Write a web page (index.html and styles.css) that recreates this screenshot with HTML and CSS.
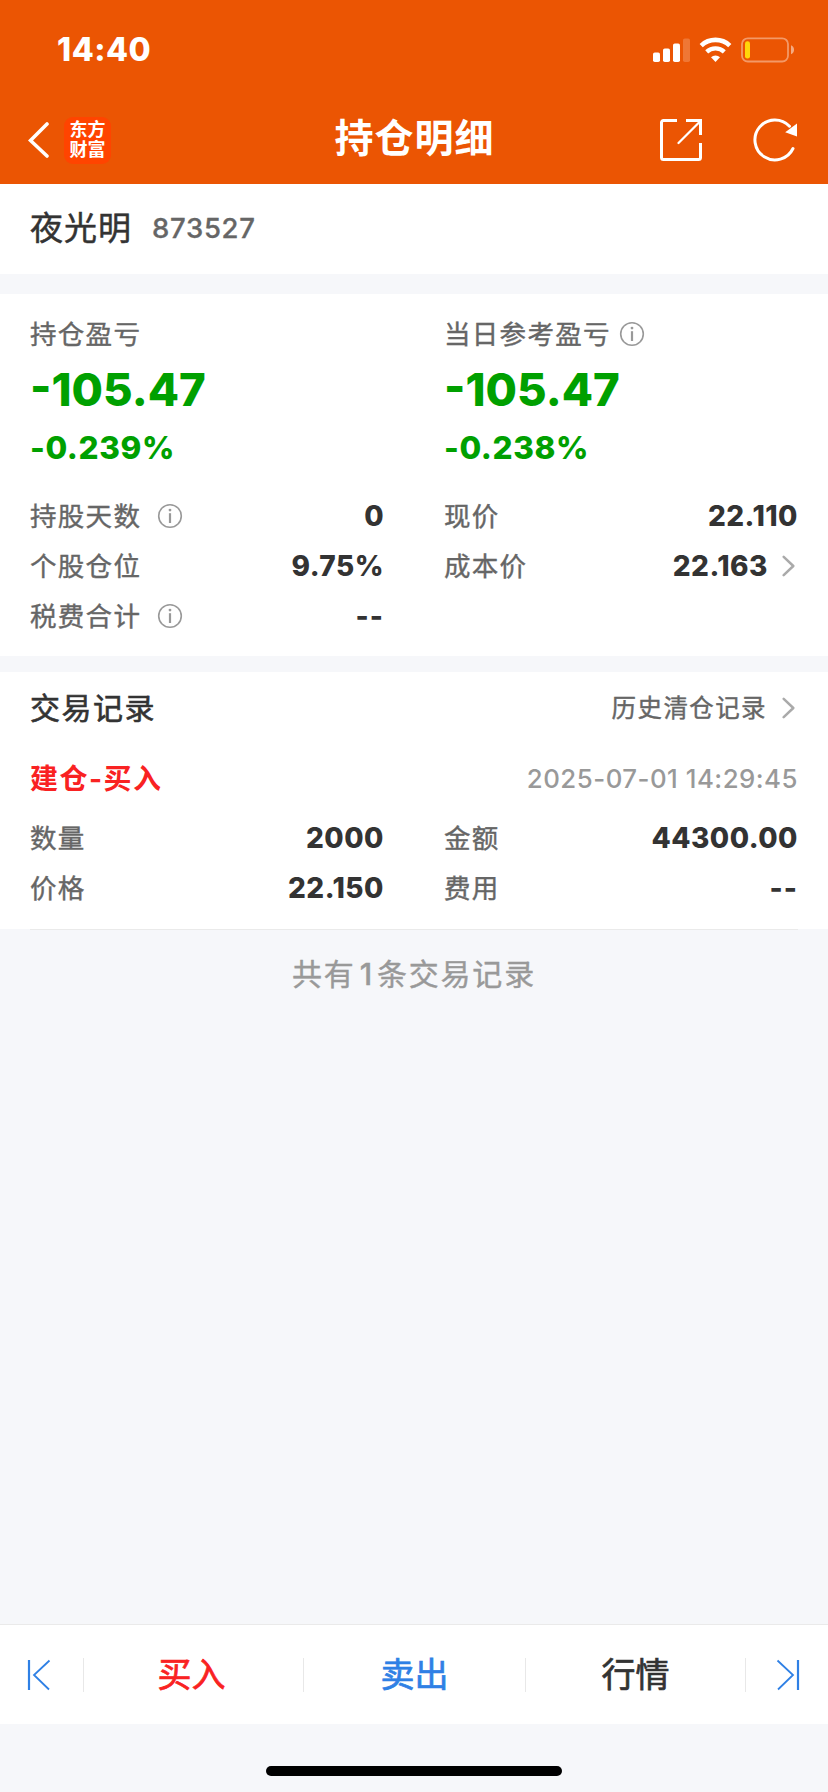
FILE: index.html
```html
<!DOCTYPE html>
<html lang="zh-CN">
<head>
<meta charset="utf-8">
<title>持仓明细</title>
<link rel="stylesheet" href="styles.css">
</head>
<body>
<svg class="defs" width="0" height="0">
  <symbol id="info" viewBox="0 0 26 26"><circle cx="13" cy="13" r="11.3" fill="none" stroke="currentColor" stroke-width="1.6"/><circle cx="13" cy="7.1" r="1.4" fill="currentColor"/><path d="M13 10.2V20" stroke="currentColor" stroke-width="2.2"/></symbol>
  <symbol id="arrow" viewBox="0 0 16 24"><path d="M1.700 2.800 11.300 12 1.700 21.200" fill="none" stroke="currentColor" stroke-width="2.500" stroke-linecap="round" stroke-linejoin="round"/></symbol>
</svg>
<div class="screen">
  <header class="header">
    <div class="status">
      <span class="time">14:40</span>
      <svg class="status-icons" width="142" height="26" viewBox="0 0 142 26">
        <g fill="#fff"><rect x="0" y="15.500" width="7" height="9.500" rx="1.800"/><rect x="10" y="11.500" width="7" height="13.500" rx="1.800"/><rect x="20" y="6.500" width="7" height="18.500" rx="1.800"/><rect x="30" y="1.500" width="7" height="23.500" rx="1.800" opacity=".2"/></g>
        <g fill="none" stroke="#fff"><path d="M48.200 8.600a20.800 20.800 0 0 1 28.600 0" stroke-width="4.600"/><path d="M53.700 14.900a12.800 12.800 0 0 1 17.600 0" stroke-width="4.300"/></g>
        <path d="M58 20.200a6.600 6.600 0 0 1 9 0L62.500 25z" fill="#fff"/>
        <rect x="89" y="1.300" width="46" height="23.200" rx="5.800" fill="none" stroke="#fff" stroke-opacity=".4" stroke-width="1.800"/>
        <path d="M138 8.300c4 1.300 4 7.700 0 9z" fill="#fff" opacity=".5"/>
        <rect x="92" y="4.300" width="5" height="17.200" rx="2.300" fill="#ffd60a"/>
      </svg>
    </div>
    <nav class="nav">
      <div class="nav-left">
        <svg width="22" height="38" viewBox="0 0 22 38"><path d="M19 3 2.500 19.500 19 35" fill="none" stroke="#fff" stroke-width="3.600" stroke-linecap="round"/></svg>
        <div class="logo"><span>东方</span><span>财富</span></div>
      </div>
      <h1 class="nav-title">持仓明细</h1>
      <div class="nav-right">
        <svg width="42" height="42" viewBox="0 0 42 42"><path d="M17 1.500H3.500a2 2 0 0 0-2 2v35a2 2 0 0 0 2 2h35a2 2 0 0 0 2-2V24M26 1.500H40.500V16" fill="none" stroke="#fff" stroke-width="3"/><path d="M18.500 24 39.500 3" fill="none" stroke="#fff" stroke-width="2.300" stroke-linecap="round"/></svg>
        <svg width="45" height="44" viewBox="0 0 45 44"><path d="M37.500 8.200A20 20 0 1 0 41 30.500" fill="none" stroke="#fff" stroke-width="3" stroke-linecap="round"/><path d="M45 5.500V18.500L33.200 14.300z" fill="#fff"/></svg>
      </div>
    </nav>
  </header>

  <section class="stock"><span class="stock-name">夜光明</span><span class="stock-code">873527</span></section>

  <section class="card summary">
    <div class="cols">
      <div class="col">
        <div class="row"><span class="label">持仓盈亏</span></div>
        <div class="profit">-105.47</div>
        <div class="percent">-0.239%</div>
        <div class="row"><span class="label">持股天数</span><svg class="info"><use href="#info"/></svg><span class="value">0</span></div>
        <div class="row"><span class="label">个股仓位</span><span class="value">9.75%</span></div>
        <div class="row"><span class="label">税费合计</span><svg class="info"><use href="#info"/></svg><span class="value dash">--</span></div>
      </div>
      <div class="col">
        <div class="row"><span class="label">当日参考盈亏</span><svg class="info near"><use href="#info"/></svg></div>
        <div class="profit">-105.47</div>
        <div class="percent">-0.238%</div>
        <div class="row"><span class="label">现价</span><span class="value">22.110</span></div>
        <div class="row"><span class="label">成本价</span><span class="value">22.163</span><svg class="arrow"><use href="#arrow"/></svg></div>
      </div>
    </div>
  </section>

  <section class="card records">
    <div class="records-head"><h2 class="records-title">交易记录</h2><span class="history">历史清仓记录</span><svg class="arrow"><use href="#arrow"/></svg></div>
    <div class="record-head"><span class="trade">建仓-买入</span><time class="date">2025-07-01 14:29:45</time></div>
    <div class="cols record-body">
      <div class="col">
        <div class="row"><span class="label">数量</span><span class="value">2000</span></div>
        <div class="row"><span class="label">价格</span><span class="value">22.150</span></div>
      </div>
      <div class="col">
        <div class="row"><span class="label">金额</span><span class="value">44300.00</span></div>
        <div class="row"><span class="label">费用</span><span class="value dash">--</span></div>
      </div>
    </div>
  </section>
  <p class="count">共有<span class="count-number">1</span>条交易记录</p>

  <footer class="bar">
    <div class="step"><svg width="24" height="34" viewBox="0 0 24 34"><path d="M2 2V32" stroke="currentColor" stroke-width="2.200"/><path d="M22.500 2.500 7 17 22 31.500" fill="none" stroke="currentColor" stroke-width="1.800"/></svg></div>
    <div class="tab buy">买入</div>
    <div class="tab sell">卖出</div>
    <div class="tab quote">行情</div>
    <div class="step last"><svg width="24" height="34" viewBox="0 0 24 34"><path d="M22 2V32" stroke="currentColor" stroke-width="2.200"/><path d="M1.500 2.500 17 17 2 31.500" fill="none" stroke="currentColor" stroke-width="1.800"/></svg></div>
  </footer>
  <div class="home"><div class="home-line"></div></div>
</div>
</body>
</html>
```

FILE: styles.css
```css
* { box-sizing: border-box; margin: 0; padding: 0; }
body { background: #f6f7fa; font-family: Inter, "Noto Sans CJK SC", sans-serif; color: #333; }
svg { display: block; flex: none; }
.defs { position: absolute; }
.screen { display: flex; flex-direction: column; width: 828px; height: 1792px; overflow: hidden; white-space: nowrap; }

.header { height: 184px; background: #eb5503; color: #fff; }
.status { display: flex; justify-content: space-between; align-items: center; height: 99px; padding: 0 33px 0 57px; }
.time { font-size: 32px; font-weight: 800; letter-spacing: .5px; }
.nav { display: grid; grid-template-columns: 1fr auto 1fr; align-items: center; height: 82px; padding: 0 31px 0 28px; }
.nav-left { display: flex; align-items: center; gap: 14px; }
.logo { display: flex; flex-direction: column; align-items: center; justify-content: center; width: 47px; height: 47px; border-radius: 9px; background: #ff4400; font-size: 18px; line-height: 20px; font-weight: 700; }
.nav-title { font-size: 39px; line-height: 60px; font-weight: 700; letter-spacing: 1px; transform: translate(2px, -2px); }
.nav-right { display: flex; align-items: center; justify-content: flex-end; gap: 50px; }

.stock { display: flex; align-items: center; height: 90px; padding: 0 30px 3px; line-height: 80px; }
.stock, .card { background: #fff; }
.stock-name { font-size: 33px; letter-spacing: 1px; -webkit-text-stroke: .5px; }
.stock-code { margin-left: 20px; color: #666; font-size: 27.500px; font-weight: 500; letter-spacing: .7px; -webkit-text-stroke: .3px; }

.summary { height: 362px; margin-top: 20px; padding: 15px 30px; }
.cols { display: grid; grid-template-columns: 1fr 1fr; column-gap: 60px; }
.row { display: flex; align-items: center; height: 50px; line-height: 50px; }
.label { color: #666; font-size: 26.500px; letter-spacing: 1.300px; -webkit-text-stroke: .4px; }
.info { width: 26px; height: 26px; margin-left: 16px; color: #999; }
.info.near { margin-left: 8px; }
.value { margin-left: auto; font-size: 28px; font-weight: 800; letter-spacing: .5px; }
.dash { letter-spacing: 1px; }
.arrow { width: 16px; height: 24px; margin-left: 14px; color: #aaa; }
.profit { height: 62px; color: #00a000; font-size: 45.500px; line-height: 62px; font-weight: 800; letter-spacing: 0; }
.percent { height: 70px; color: #00a000; font-size: 31.500px; line-height: 53px; font-weight: 800; letter-spacing: .6px; }

.records { height: 257px; margin-top: 16px; padding: 0 30px; }
.records-head { display: flex; align-items: center; height: 72px; line-height: 50px; }
.records-title { font-size: 30px; font-weight: 400; letter-spacing: 1.500px; -webkit-text-stroke: .6px; }
.history { margin-left: auto; color: #666; font-size: 24.500px; letter-spacing: 1.400px; -webkit-text-stroke: .4px; }
.records .history + .arrow { margin-left: 15px; }
.record-head { display: flex; align-items: center; justify-content: space-between; height: 69px; line-height: 50px; }
.trade { color: #f92222; font-size: 28px; font-weight: 700; letter-spacing: 1.500px; }
.date { color: #999; font-size: 25.800px; font-weight: 500; letter-spacing: .5px; }
.record-body { height: 117px; border-bottom: 1px solid #eaeaea; }
.count { flex: 1; padding-top: 20px; color: #999; font-size: 30px; line-height: 50px; letter-spacing: 1.800px; text-align: center; -webkit-text-stroke: .4px; }
.count-number { padding: 0 3px 0 4px; font-weight: 500; }

.bar { display: grid; grid-template-columns: 83px 220px 222px 220px 83px; align-items: center; height: 100px; background: #fff; border-top: 1px solid #eaeaea; }
.step { display: flex; align-items: center; height: 34px; padding-left: 27px; color: #2f80e5; }
.step.last { padding-left: 30px; border-left: 1px solid #e8e8e8; }
.tab { height: 34px; border-left: 1px solid #e8e8e8; font-size: 34px; line-height: 34px; text-align: center; -webkit-text-stroke: .7px; }
.buy { padding-right: 4px; color: #f92222; }
.sell { color: #2f80e5; }
.home { height: 68px; padding-top: 42px; }
.home-line { width: 296px; height: 10px; margin: 0 auto; border-radius: 5px; background: #000; }
```
